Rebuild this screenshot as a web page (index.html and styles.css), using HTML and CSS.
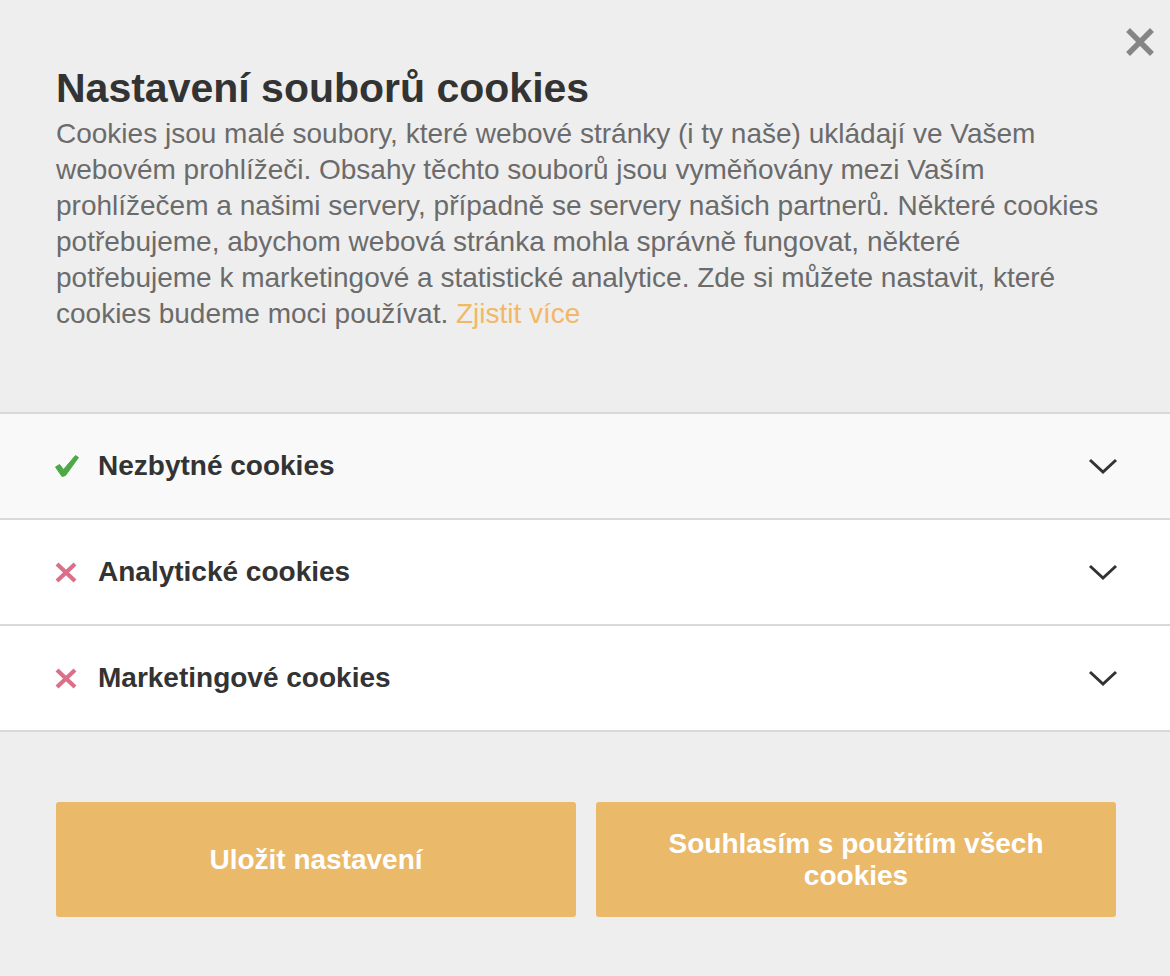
FILE: index.html
```html
<!DOCTYPE html>
<html lang="cs">
<head>
<meta charset="utf-8">
<title>Nastavení souborů cookies</title>
<link rel="stylesheet" href="styles.css">
</head>
<body>
<div class="modal">
  <button class="close" aria-label="Zavřít">
    <svg width="28" height="28" viewBox="0 0 28 28"><path d="M4 4 L24 24 M24 4 L4 24" stroke="#858585" stroke-width="5.5" stroke-linecap="square"/></svg>
  </button>
  <header class="intro">
    <h1 class="title">Nastavení souborů cookies</h1>
    <p class="desc">Cookies jsou malé soubory, které webové stránky (i ty naše) ukládají ve Vašem webovém prohlížeči. Obsahy těchto souborů jsou vyměňovány mezi Vaším prohlížečem a našimi servery, případně se servery našich partnerů. Některé cookies potřebujeme, abychom webová stránka mohla správně fungovat, některé potřebujeme k marketingové a statistické analytice. Zde si můžete nastavit, které cookies budeme moci používat. <a class="more" href="#">Zjistit více</a></p>
  </header>
  <div class="sections">
    <div class="row row-required">
      <span class="status">
        <svg width="26" height="24" viewBox="0 0 26 24"><path d="M1.5 13 L5.5 10.5 L9.5 15.5 L21.5 1.5 L24.5 3.5 L11.5 21.5 L8 22.5 Z" fill="#4caa46" stroke="#4caa46" stroke-width="1" stroke-linejoin="round"/></svg>
      </span>
      <span class="label">Nezbytné cookies</span>
      <svg class="chev" width="30" height="18" viewBox="0 0 30 18"><path d="M2 3 L15 15 L28 3" fill="none" stroke="#333" stroke-width="3"/></svg>
    </div>
    <div class="row">
      <span class="status">
        <svg width="24" height="24" viewBox="0 0 24 24"><path d="M3 4 L21 21 M21 4 L3 21" stroke="#db6f88" stroke-width="4.2"/></svg>
      </span>
      <span class="label">Analytické cookies</span>
      <svg class="chev" width="30" height="18" viewBox="0 0 30 18"><path d="M2 3 L15 15 L28 3" fill="none" stroke="#333" stroke-width="3"/></svg>
    </div>
    <div class="row">
      <span class="status">
        <svg width="24" height="24" viewBox="0 0 24 24"><path d="M3 4 L21 21 M21 4 L3 21" stroke="#db6f88" stroke-width="4.2"/></svg>
      </span>
      <span class="label">Marketingové cookies</span>
      <svg class="chev" width="30" height="18" viewBox="0 0 30 18"><path d="M2 3 L15 15 L28 3" fill="none" stroke="#333" stroke-width="3"/></svg>
    </div>
  </div>
  <div class="actions">
    <button class="btn">Uložit nastavení</button>
    <button class="btn">Souhlasím s použitím všech cookies</button>
  </div>
</div>
</body>
</html>
```

FILE: styles.css
```css
html, body {
  margin: 0;
  padding: 0;
}
body {
  background: #eeeeee;
  font-family: "Liberation Sans", Arial, sans-serif;
  color: #333;
  width: 1170px;
  height: 976px;
  overflow: hidden;
}
.modal {
  position: relative;
  width: 1170px;
  min-height: 976px;
}
.close {
  position: absolute;
  top: 28px;
  right: 16px;
  background: none;
  border: 0;
  padding: 0;
  width: 28px;
  height: 28px;
  cursor: pointer;
}
.close svg { display: block; }
.intro {
  padding: 64px 54px 80px 56px;
}
.title {
  margin: 0 0 4px;
  font-size: 41px;
  line-height: 48px;
  font-weight: 700;
  color: #333;
}
.desc {
  margin: 0;
  font-size: 28px;
  line-height: 36px;
  color: #6b6b6b;
}
.more {
  color: #f1b866;
  text-decoration: none;
}
.sections {
  border-bottom: 2px solid #d9d9d9;
}
.row {
  display: flex;
  align-items: center;
  height: 104px;
  border-top: 2px solid #d9d9d9;
  background: #fff;
  padding: 0 52px 0 54px;
}
.row-required {
  background: #f9f9f9;
}
.status {
  width: 44px;
  display: flex;
  align-items: center;
}
.status svg { display: block; }
.label {
  flex: 1;
  font-size: 28px;
  font-weight: 700;
  color: #333;
}
.chev {
  display: block;
}
.actions {
  display: flex;
  gap: 20px;
  padding: 70px 54px 0 56px;
}
.btn {
  flex: 1;
  height: 115px;
  border: 0;
  border-radius: 3px;
  background: #eab96a;
  color: #fff;
  font-family: "Liberation Sans", Arial, sans-serif;
  font-size: 28px;
  line-height: 32px;
  font-weight: 700;
  padding: 0 60px;
  cursor: pointer;
}
```
